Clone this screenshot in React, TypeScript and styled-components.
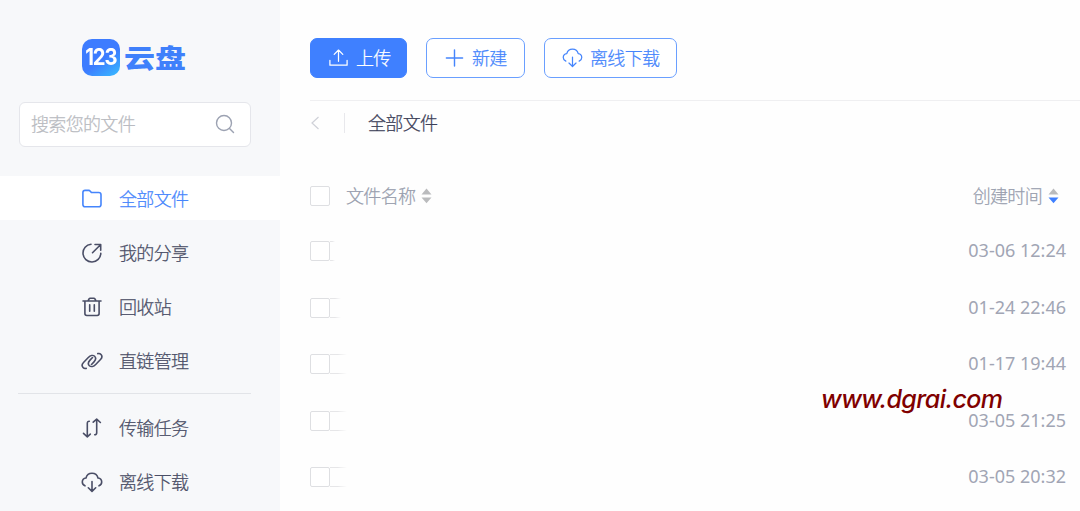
import React from "react";
import styled, { createGlobalStyle } from "styled-components";

const GlobalStyle = createGlobalStyle`
  * { box-sizing: border-box; }
  body {
    margin: 0;
    background: #fefefe;
    color: #4a4e66;
    font-family: "Noto Sans", "Noto Sans CJK SC", sans-serif;
    font-size: 18px;
    overflow: hidden;
  }
`;

const Page = styled.div`
  position: relative;
  display: flex;
  width: 1080px;
  height: 511px;
  overflow: hidden;
`;

const Sidebar = styled.aside`
  flex: none;
  width: 280px;
  background: #f7f8fa;
  display: flex;
  flex-direction: column;
`;

const Label = styled.span`
  font-family: "Noto Sans CJK SC", sans-serif;
  font-size: 18px;
  font-weight: 300;
  line-height: 26px;
  padding-bottom: 2px;
  margin-left: -1px;
  letter-spacing: -0.66px;
  white-space: nowrap;
  -webkit-text-stroke: 0.25px currentColor;
`;

const Brand = styled.div`
  flex: none;
  display: flex;
  align-items: center;
  height: 37px;
  margin: 39px 0 0 82px;
`;

const BrandMark = styled.div`
  width: 38px;
  height: 37px;
  border-radius: 10px;
  background: linear-gradient(145deg, #3d7cff 55%, #38b6ff 95%);
  color: #fff;
  display: flex;
  align-items: center;
  justify-content: center;
`;

const BrandDigits = styled.span`
  font: 700 23px/37px Inter, sans-serif;
  letter-spacing: -1.2px;
  transform: scaleX(0.88);
`;

const BrandName = styled.span`
  margin-left: 4px;
  color: #3f80fb;
  font: 900 31px/37px "Noto Sans CJK SC", sans-serif;
  transform: translateY(-1px) scaleY(0.85);
`;

const SearchBox = styled.div`
  flex: none;
  display: flex;
  align-items: center;
  justify-content: space-between;
  width: 232px;
  height: 45px;
  margin: 26px 0 29px 19px;
  padding: 0 15px 1px 12px;
  border: 1px solid #e5e6eb;
  border-radius: 6px;
  background: #fff;
  color: #b9bbc1;
`;

const NavItem = styled.div<{ $active?: boolean }>`
  flex: none;
  display: flex;
  align-items: center;
  gap: 17px;
  height: 44px;
  margin-bottom: 10px;
  padding: 1px 0 0 81px;
  color: ${(p) => (p.$active ? "#4585fc" : "#4a4e66")};
  background: ${(p) => (p.$active ? "#fff" : "transparent")};
`;

const NavDivider = styled.div`
  flex: none;
  height: 1px;
  margin: 1px 29px 11px 18px;
  background: #e2e4e8;
`;

const Main = styled.main`
  flex: 1;
  min-width: 0;
  padding: 38px 0 0 30px;
`;

const Toolbar = styled.div`
  display: flex;
  gap: 19px;
  height: 62px;
`;

const Button = styled.button<{ $primary?: boolean; $width: number }>`
  display: flex;
  align-items: center;
  gap: 8px;
  width: ${(p) => p.$width}px;
  height: 40px;
  padding: 0 0 1px 17px;
  border: 1px solid ${(p) => (p.$primary ? "#3f80ff" : "#6a9fff")};
  border-radius: 7px;
  background: ${(p) => (p.$primary ? "#3f80ff" : "#fff")};
  color: ${(p) => (p.$primary ? "#fff" : "#4585fc")};
`;

const Breadcrumb = styled.div`
  display: flex;
  align-items: center;
  height: 46px;
  padding-bottom: 1px;
  border-top: 1px solid #efeff1;
  color: #3c4058;
`;

const CrumbDivider = styled.i`
  width: 1px;
  height: 20px;
  margin: 0 24px 0 22px;
  background: #e8e8ec;
`;

const Table = styled.div`
  margin-top: 23px;
`;

const HeaderRow = styled.div`
  display: flex;
  align-items: center;
  height: 54px;
  color: #999eae;
`;

const Row = styled.div`
  display: flex;
  align-items: center;
  justify-content: space-between;
  height: 56.5px;
  padding-right: 14px;
  color: #a1a5b4;
`;

const Checkbox = styled.span<{ $header?: boolean }>`
  width: 20px;
  height: 20px;
  border: 1px solid #dedfe2;
  border-radius: 2px;
  background: #fff;
  margin-right: ${(p) => (p.$header ? 17 : 0)}px;
`;

const CheckCell = styled.div`
  display: flex;
  align-items: center;
`;

const CellRemnant = styled.i<{ $width: number }>`
  width: ${(p) => p.$width}px;
  height: 20px;
  border: solid #e6e6e8;
  border-width: 1px 0;
  mask-image: linear-gradient(90deg, #000 45%, transparent);
`;

const DateText = styled.time`
  font: 400 18px/26px "Noto Sans", sans-serif;
  padding-bottom: 2px;
  white-space: nowrap;
`;

const Sorter = styled.svg`
  margin-left: 6px;
`;

const Spacer = styled.span`
  flex: 1;
`;

const CreatedHead = styled.div`
  display: flex;
  align-items: center;
  padding-right: 21px;
`;

const SiteMark = styled.div`
  position: absolute;
  left: 821px;
  top: 384px;
  color: #800000;
  font: italic 500 25px/30px Inter, sans-serif;
  letter-spacing: -0.6px;
  white-space: nowrap;
`;

type IconProps = { size?: number; width?: number; children: React.ReactNode };
const Icon = ({ size = 22, width = 1.6, children }: IconProps) => (
  <svg width={size} height={size} viewBox="0 0 22 22" fill="none" stroke="currentColor"
    strokeWidth={width} strokeLinecap="round" strokeLinejoin="round">{children}</svg>
);

const cloud = (
  <>
    <path d="M4 14.8C2.3 14 1.3 12.7 1.3 11c0-2.2 1.6-3.7 3.7-4C5.700 4.200 8 2.300 11 2.300s5.300 1.900 6 4.700c2.100.3 3.700 1.800 3.700 4 0 1.700-1 3-2.700 3.800" />
    <path d="M11 10.500v9.700M7.300 16.800l3.700 3.600 3.700-3.600" />
  </>
);

const icons = {
  folder: <path d="M1.900 4.600c0-1.500.7-2.200 2.200-2.200h3.600c.7 0 1.200.3 1.600.8l1.100 1.300h7.300c1.500 0 2.300.8 2.300 2.200v9.700c0 1.500-.8 2.300-2.300 2.300H4.200c-1.500 0-2.300-.8-2.300-2.300z" />,
  share: (
    <>
      <path d="M10 2.200a8.900 8.900 0 1 0 9.800 9.100" />
      <path d="M11.500 10.700l8-8M14 2.500h5.700v5.700" />
    </>
  ),
  trash: (
    <>
      <path d="M2 5h18M3.900 5v12.600c0 1.200.7 1.900 1.900 1.900h10.400c1.200 0 1.900-.7 1.900-1.900V5M7.200 4.700l.7-1.500c.3-.6.700-.9 1.400-.9h3.400c.7 0 1.100.3 1.400.9l.7 1.500" />
      <path d="M8.700 8.800v6.500M13.300 8.800v6.500" />
    </>
  ),
  link: (
    <>
      <path d="M5.200 18.400c-1.200.3-2.400 0-3.200-.9-1.300-1.500-1-3.500.5-5L7.300 7.500c2-2 4.800-2.700 6.300-1.200s1.100 3.800-.6 5.600l-2.500 2.600" />
      <path d="M16.800 3.600c1.200-.3 2.400 0 3.200.9 1.300 1.500 1 3.500-.5 5l-4.800 5c-2 2-4.800 2.700-6.300 1.200s-1.100-3.800.6-5.600l2.500-2.600" />
    </>
  ),
  transfer: (
    <>
      <path d="M8.300 4.300c-1.400 0-2 .6-2 2v13.200M2.500 16.400l3.800 3.400 3-2.700" />
      <path d="M13.700 17.700c1.400 0 2-.6 2-2V2.500M12.200 5.200l3.500-3.100 3.700 3.400" />
    </>
  ),
  cloud,
};

const NAV: { icon: keyof typeof icons; text: string }[] = [
  { icon: "folder", text: "全部文件" },
  { icon: "share", text: "我的分享" },
  { icon: "trash", text: "回收站" },
  { icon: "link", text: "直链管理" },
];

const NAV_MORE: typeof NAV = [
  { icon: "transfer", text: "传输任务" },
  { icon: "cloud", text: "离线下载" },
];

const ROWS = [
  { date: "03-06 12:24", tail: 5 },
  { date: "01-24 22:46", tail: 11 },
  { date: "01-17 19:44", tail: 17 },
  { date: "03-05 21:25", tail: 17 },
  { date: "03-05 20:32", tail: 17 },
];

const SortArrows = ({ desc = false }: { desc?: boolean }) => (
  <Sorter width="11" height="16" viewBox="0 0 11 16">
    <path d="M5.500.500L10.500 6.500H.500z" fill="#babbbd" />
    <path d="M.500 9.500h10L5.500 15.300z" fill={desc ? "#3f80ff" : "#babbbd"} />
  </Sorter>
);

export default function App() {
  return (
    <Page>
      <GlobalStyle />
      <Sidebar>
        <Brand>
          <BrandMark><BrandDigits>123</BrandDigits></BrandMark>
          <BrandName>云盘</BrandName>
        </Brand>
        <SearchBox>
          <Label>搜索您的文件</Label>
          <svg width="20" height="20" viewBox="0 0 20 20" fill="none" stroke="#9ca2b2" strokeWidth="1.400" strokeLinecap="round">
            <circle cx="9" cy="9" r="7.500" />
            <path d="M14.500 14.500l4 4" />
          </svg>
        </SearchBox>
        {NAV.map((n, i) => (
          <NavItem key={n.text} $active={i === 0}>
            <Icon>{icons[n.icon]}</Icon>
            <Label>{n.text}</Label>
          </NavItem>
        ))}
        <NavDivider />
        {NAV_MORE.map((n) => (
          <NavItem key={n.text}>
            <Icon>{icons[n.icon]}</Icon>
            <Label>{n.text}</Label>
          </NavItem>
        ))}
      </Sidebar>
      <Main>
        <Toolbar>
          <Button $primary $width={97}>
            <Icon size={21} width={1.3}><path d="M2 14v5h18v-5M11 15V3.300M6.500 7.700L11 3.200l4.500 4.500" /></Icon>
            <Label>上传</Label>
          </Button>
          <Button $width={99}>
            <Icon size={21} width={1.5}><path d="M11 3v17M2.500 11.500h17" /></Icon>
            <Label>新建</Label>
          </Button>
          <Button $width={133}>
            <Icon size={21} width={1.3}>{cloud}</Icon>
            <Label>离线下载</Label>
          </Button>
        </Toolbar>
        <Breadcrumb>
          <svg width="12" height="14" viewBox="0 0 12 14" fill="none" stroke="#cfd1d8" strokeWidth="1.200">
            <path d="M8.500 1L2 7l6.500 6" />
          </svg>
          <CrumbDivider />
          <Label>全部文件</Label>
        </Breadcrumb>
        <Table>
          <HeaderRow>
            <Checkbox $header />
            <Label>文件名称</Label>
            <SortArrows />
            <Spacer />
            <CreatedHead>
              <Label>创建时间</Label>
              <SortArrows desc />
            </CreatedHead>
          </HeaderRow>
          {ROWS.map((r) => (
            <Row key={r.date}>
              <CheckCell>
                <Checkbox />
                <CellRemnant $width={r.tail} />
              </CheckCell>
              <DateText>{r.date}</DateText>
            </Row>
          ))}
        </Table>
      </Main>
      <SiteMark>www.dgrai.com</SiteMark>
    </Page>
  );
}
